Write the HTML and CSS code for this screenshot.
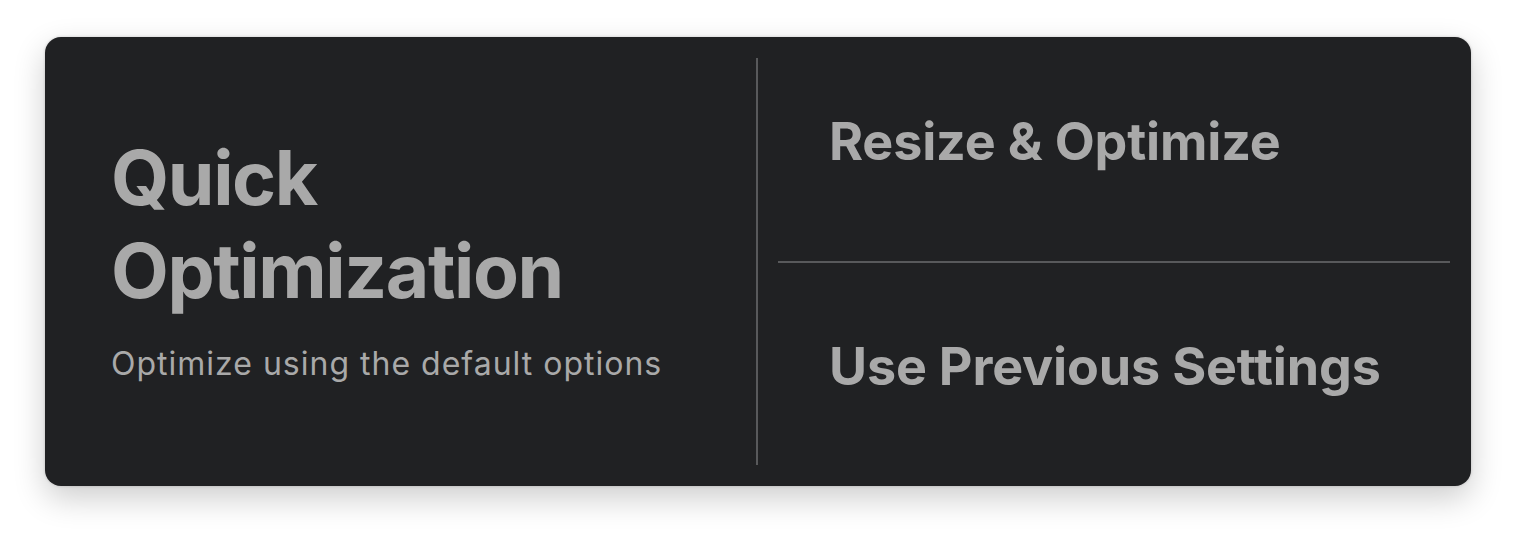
FILE: index.html
```html
<!DOCTYPE html>
<html>
<head>
<meta charset="utf-8">
<link rel="stylesheet" href="styles.css">
</head>
<body>
<div class="card">
  <div class="quick">
    <div class="quick-title">Quick<br>Optimization</div>
    <div class="quick-sub">Optimize using the default options</div>
  </div>
  <div class="vdiv"></div>
  <div class="options">
    <div class="option option-top">Resize &amp; Optimize</div>
    <div class="hdiv"></div>
    <div class="option option-bottom">Use Previous Settings</div>
  </div>
</div>
</body>
</html>
```

FILE: styles.css
```css
html, body {
  margin: 0;
  padding: 0;
  background: #ffffff;
}
body {
  box-sizing: border-box;
  min-height: 540px;
  padding: 37px 45px 0 45px;
  font-family: Inter, "Noto Sans", "Liberation Sans", sans-serif;
}
.card {
  box-sizing: border-box;
  width: 1426px;
  height: 449px;
  background: #202123;
  border-radius: 16px;
  box-shadow: 0 12px 32px rgba(0, 0, 0, 0.2), 0 0 3px rgba(0, 0, 0, 0.18);
  padding: 21px 21px 21px 0;
  display: grid;
  grid-template-columns: 711px 2px 1fr;
}
.quick {
  display: flex;
  flex-direction: column;
  padding: 73px 0 0 66px;
  color: #a9a9a9;
}
.quick-title {
  font-size: 75px;
  font-weight: 700;
  line-height: 93px;
  letter-spacing: -1.4px;
}
.quick-sub {
  font-size: 32px;
  font-weight: 400;
  margin-top: 27px;
  letter-spacing: 1px;
}
.vdiv {
  background: #58595b;
}
.options {
  display: grid;
  grid-template-rows: 1fr 2px 1fr;
  padding-left: 20px;
}
.hdiv {
  background: #58595b;
}
.option {
  padding-left: 51px;
  color: #a9a9a9;
  font-size: 52px;
  font-weight: 700;
  letter-spacing: -0.15px;
}
.option-top {
  padding-top: 52px;
}
.option-bottom {
  padding-top: 72px;
}
```
